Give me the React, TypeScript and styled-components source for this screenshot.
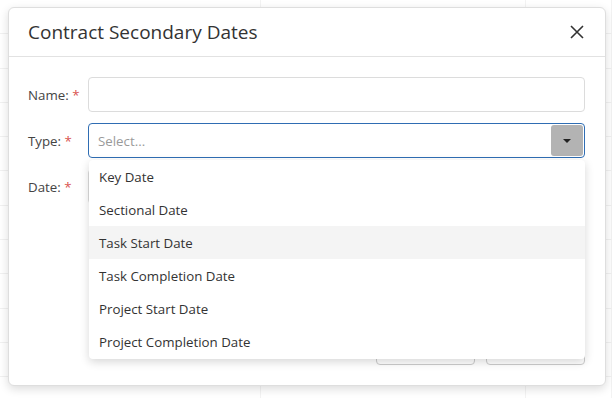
import React, { useState } from "react";
import styled, { createGlobalStyle } from "styled-components";

const GlobalStyle = createGlobalStyle`
    html, body {
        margin: 0;
        padding: 0;
        background: #ffffff;
        font-family: "Open Sans", "Noto Sans", sans-serif;
        color: #333333;
    }
    * {
        box-sizing: border-box;
    }
`;

const typeOptions = [
    "Key Date",
    "Sectional Date",
    "Task Start Date",
    "Task Completion Date",
    "Project Start Date",
    "Project Completion Date",
];

const App: React.FC = () => {
    const [hovered, setHovered] = useState("Task Start Date");

    return (
        <>
            <GlobalStyle />
            <Page>
                <Backdrop>
                    {Array.from({ length: 12 }).map((_, i) => (
                        <BackdropRow key={i}>
                            <BackdropCell />
                            <BackdropCell />
                            <BackdropCell />
                        </BackdropRow>
                    ))}
                </Backdrop>

                <Modal>
                    <Header>
                        <Title>Contract Secondary Dates</Title>
                        <CloseButton aria-label="Close">
                            <svg width="14" height="14" viewBox="0 0 14 14">
                                <path d="M1 1 L13 13 M13 1 L1 13" stroke="#333" strokeWidth="1.6" fill="none" />
                            </svg>
                        </CloseButton>
                    </Header>

                    <Body>
                        <FieldRow>
                            <Label>Name: <Required>*</Required></Label>
                            <TextInput />
                        </FieldRow>

                        <FieldRow>
                            <Label>Type: <Required>*</Required></Label>
                            <SelectWrap>
                                <SelectBox $open>
                                    <Placeholder>Select...</Placeholder>
                                    <ArrowButton>
                                        <Caret />
                                    </ArrowButton>
                                </SelectBox>
                                <Menu>
                                    {typeOptions.map((opt) => (
                                        <MenuItem
                                            key={opt}
                                            $active={opt === hovered}
                                            onMouseEnter={() => setHovered(opt)}
                                        >
                                            {opt}
                                        </MenuItem>
                                    ))}
                                </Menu>
                            </SelectWrap>
                        </FieldRow>

                        <FieldRow>
                            <Label>Date: <Required>*</Required></Label>
                            <TextInput />
                        </FieldRow>
                    </Body>

                    <Footer>
                        <FooterButton>Save</FooterButton>
                        <FooterButton>Cancel</FooterButton>
                    </Footer>
                </Modal>
            </Page>
        </>
    );
};

export default App;

const Page = styled.div`
    position: relative;
    width: 612px;
    height: 398px;
    overflow: hidden;
    background: #ffffff;
`;

const Backdrop = styled.div`
    display: flex;
    flex-direction: column;
`;

const BackdropRow = styled.div`
    display: grid;
    grid-template-columns: 261px 265px 1fr;
    height: 34.3px;
    border-bottom: 1px solid #f1f1f1;
`;

const BackdropCell = styled.div`
    border-right: 1px solid #f3f3f3;
`;

const Modal = styled.div`
    position: absolute;
    left: 8px;
    top: 7px;
    width: 598px;
    height: 379px;
    background: #ffffff;
    border: 1px solid #dedede;
    border-radius: 6px;
    box-shadow: 0 3px 10px rgba(0, 0, 0, 0.14);
    display: flex;
    flex-direction: column;
`;

const Header = styled.div`
    height: 49px;
    display: flex;
    align-items: center;
    justify-content: space-between;
    padding: 0 21px 0 19px;
    border-bottom: 1px solid #e2e2e2;
`;

const Title = styled.h2`
    margin: 0;
    font-size: 19px;
    font-weight: 400;
    color: #333333;
`;

const CloseButton = styled.button`
    border: none;
    background: none;
    padding: 0;
    display: flex;
    cursor: pointer;
`;

const Body = styled.div`
    display: flex;
    flex-direction: column;
    gap: 11px;
    padding: 20px 20px 0 19px;
`;

const FieldRow = styled.div`
    display: flex;
    align-items: center;
`;

const Label = styled.label`
    width: 60px;
    flex-shrink: 0;
    font-size: 13.3px;
    color: #444444;
`;

const Required = styled.span`
    color: #d9534f;
`;

const TextInput = styled.input`
    flex: 1;
    height: 35px;
    border: 1px solid #dcdcdc;
    border-radius: 4px;
    padding: 0 9px;
    font-size: 13.3px;
    font-family: inherit;

    &:focus {
        outline: none;
        border-color: #2f6db3;
    }
`;

const SelectWrap = styled.div`
    flex: 1;
    position: relative;
`;

const SelectBox = styled.div<{ $open?: boolean }>`
    height: 35px;
    display: flex;
    align-items: center;
    justify-content: space-between;
    border: 1px solid ${(p) => (p.$open ? "#2f6db3" : "#dcdcdc")};
    border-radius: 4px;
    padding: 0 1px 0 9px;
    cursor: pointer;
`;

const Placeholder = styled.span`
    font-size: 13.3px;
    color: #9a9a9a;
`;

const ArrowButton = styled.span`
    width: 32px;
    height: 31px;
    background: #b3b3b3;
    border-radius: 3px;
    display: flex;
    align-items: center;
    justify-content: center;
`;

const Caret = styled.span`
    width: 0;
    height: 0;
    border-left: 4px solid transparent;
    border-right: 4px solid transparent;
    border-top: 4px solid #222222;
`;

const Menu = styled.ul`
    position: absolute;
    top: 37px;
    left: 1px;
    right: 0;
    margin: 0;
    padding: 0 0 1px;
    list-style: none;
    background: #ffffff;
    border-radius: 4px;
    box-shadow: 0 3px 10px rgba(0, 0, 0, 0.16);
    z-index: 2;
`;

const MenuItem = styled.li<{ $active?: boolean }>`
    height: 33px;
    display: flex;
    align-items: center;
    padding-left: 10px;
    font-size: 13.3px;
    color: #333333;
    background: ${(p) => (p.$active ? "#f4f4f4" : "transparent")};
    cursor: pointer;
`;

const Footer = styled.div`
    margin-top: auto;
    display: flex;
    justify-content: flex-end;
    gap: 11px;
    padding: 0 20px 20px;
`;

const FooterButton = styled.button`
    width: 99px;
    height: 34px;
    border: 1px solid #cccccc;
    border-radius: 4px;
    background: #ffffff;
    font-size: 13px;
    font-family: inherit;
    color: #333333;
`;
